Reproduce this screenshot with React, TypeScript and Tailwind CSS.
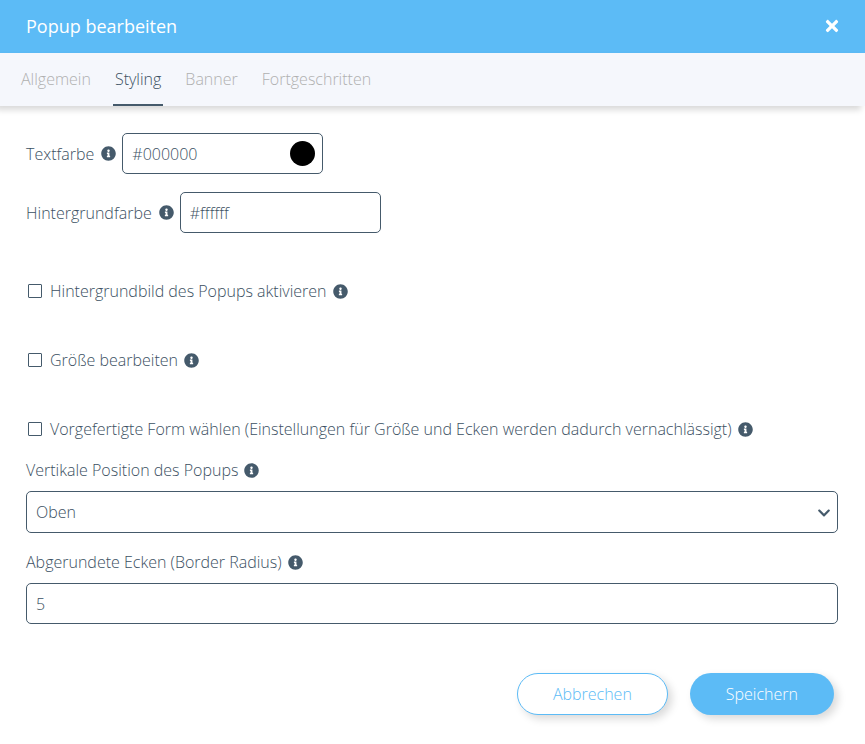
import { useId, useState } from "react";
import type { ReactNode } from "react";
import { FaChevronDown, FaInfoCircle, FaTimes } from "react-icons/fa";

const tabs = ["Allgemein", "Styling", "Banner", "Fortgeschritten"];

function InfoIcon() {
  return <FaInfoCircle className="size-[15px] shrink-0 text-[#455a6b]" aria-hidden="true" />;
}

function ColorField({ label, initial, swatch }: { label: string; initial: string; swatch?: boolean }) {
  const id = useId();
  const [value, setValue] = useState(initial);
  return (
    <div className="flex items-center gap-1.5">
      <label htmlFor={id} className="flex items-center gap-[7px]">
        {label}
        <InfoIcon />
      </label>
      <div className="relative">
        <input
          id={id}
          type="text"
          value={value}
          onChange={(e) => setValue(e.target.value)}
          className="block h-[41px] w-[201px] rounded-[5px] border border-[#455a6b] bg-white px-[9px]"
        />
        {swatch && (
          <span className="absolute top-2 right-2 size-[25px] rounded-full" style={{ backgroundColor: value }} />
        )}
      </div>
    </div>
  );
}

function CheckRow({ children }: { children: ReactNode }) {
  return (
    <label className="flex items-center gap-1.5">
      <input
        type="checkbox"
        className="mx-0.5 size-3.5 shrink-0 appearance-none rounded-[1px] border-[1.5px] border-[#455a6b] bg-white checked:bg-[#455a6b]"
      />
      <span>{children}</span>
      <InfoIcon />
    </label>
  );
}

export default function App() {
  const [active, setActive] = useState("Styling");
  const [position, setPosition] = useState("Oben");
  const [radius, setRadius] = useState("5");

  return (
    <div className="min-h-screen bg-white font-['Open_Sans',sans-serif] text-base leading-6 font-light text-[#3b5062]">
      <header className="flex h-[53px] items-center justify-between bg-[#5cbbf6] pr-[24px] pb-px pl-[26px] text-white">
        <h1 className="text-lg font-normal">Popup bearbeiten</h1>
        <button type="button" aria-label="Schließen">
          <FaTimes className="size-[18px]" />
        </button>
      </header>

      <nav className="flex h-[53px] gap-5 bg-[#f5f7fc] px-[19px] shadow-[-4px_4px_6px_rgba(0,0,0,0.15)]">
        {tabs.map((tab) => (
          <button
            key={tab}
            type="button"
            onClick={() => setActive(tab)}
            className={
              tab === active
                ? "border-b-2 border-[#455a6b] px-0.5"
                : "border-b-2 border-transparent px-0.5 text-[#b0b0b0]"
            }
          >
            {tab}
          </button>
        ))}
      </nav>

      <form className="pt-[27px] pr-[27px] pb-7 pl-[26px]" onSubmit={(e) => e.preventDefault()}>
        <div className="flex flex-col gap-[18px]">
          <ColorField label="Textfarbe" initial="#000000" swatch />
          <ColorField label="Hintergrundfarbe" initial="#ffffff" />
        </div>

        <div className="mt-[46px] flex flex-col gap-[45px]">
          <CheckRow>Hintergrundbild des Popups aktivieren</CheckRow>
          <CheckRow>Größe bearbeiten</CheckRow>
          <CheckRow>
            Vorgefertigte Form wählen (Einstellungen für Größe und Ecken werden dadurch vernachlässigt)
          </CheckRow>
        </div>

        <div className="mt-[17px]">
          <label htmlFor="position" className="flex items-center gap-1.5">
            Vertikale Position des Popups
            <InfoIcon />
          </label>
          <div className="relative mt-[9px]">
            <select
              id="position"
              value={position}
              onChange={(e) => setPosition(e.target.value)}
              className="block h-[42px] w-full appearance-none rounded-[5px] border border-[#455a6b] bg-white px-[9px]"
            >
              <option>Oben</option>
              <option>Mitte</option>
              <option>Unten</option>
            </select>
            <FaChevronDown className="pointer-events-none absolute top-[15px] right-[7px] size-3.5 text-[#455a6b]" />
          </div>
        </div>

        <div className="mt-[17px]">
          <label htmlFor="radius" className="flex items-center gap-1.5">
            Abgerundete Ecken (Border Radius)
            <InfoIcon />
          </label>
          <input
            id="radius"
            type="text"
            value={radius}
            onChange={(e) => setRadius(e.target.value)}
            className="mt-[9px] block h-[41px] w-full rounded-[5px] border border-[#455a6b] bg-white px-[9px]"
          />
        </div>

        <div className="mt-[49px] flex justify-end gap-[22px] pr-1">
          <button
            type="button"
            className="h-[42px] rounded-full border border-[#5cbbf6] bg-white px-[35px] text-[#5cbbf6] shadow-[4px_4px_8px_rgba(0,0,0,0.15)]"
          >
            Abbrechen
          </button>
          <button
            type="submit"
            className="h-[42px] rounded-full bg-[#5cbbf6] px-9 text-white shadow-[4px_4px_8px_rgba(0,0,0,0.15)]"
          >
            Speichern
          </button>
        </div>
      </form>
    </div>
  );
}
